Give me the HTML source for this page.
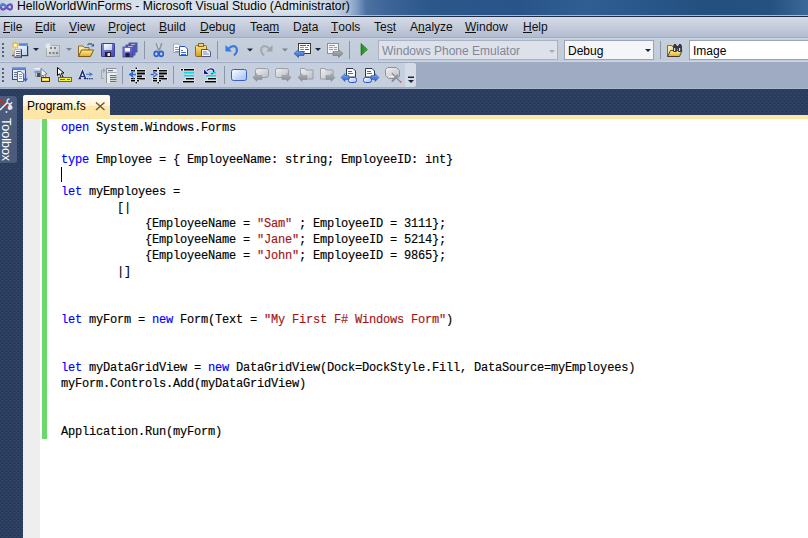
<!DOCTYPE html>
<html><head><meta charset="utf-8">
<style>
*{margin:0;padding:0;box-sizing:border-box}
html,body{width:808px;height:538px;overflow:hidden;background:#293955;font-family:"Liberation Sans",sans-serif}
#title{position:absolute;left:0;top:0;width:808px;height:15px;background:linear-gradient(90deg,#c3d0e1 0,#d3deea 14px,#dae3ee 300px,#c4d2e3 334px,#a8bcd4 348px,#7d9cc2 357px,#4d72a2 366px,#3e6698 385px,#2c578b 430px,#28548a 520px,#305e92 585px,#2b598d 630px,#24507f 700px,#25517f 770px,#3a6898 808px)}
#tglow{position:absolute;left:0;top:0;width:360px;height:15px;background:linear-gradient(rgba(255,255,255,0) 0,rgba(255,255,255,0.12) 60%,rgba(0,0,0,0.03) 100%);-webkit-mask-image:linear-gradient(90deg,#000 0,#000 330px,transparent 360px)}
#ttext{position:absolute;left:17px;top:-1px;font-size:12.2px;color:#000;white-space:nowrap;line-height:15px}
#tline{position:absolute;left:0;top:15px;width:808px;height:1px;background:linear-gradient(90deg,#c5d3e3 0,#c5d3e3 340px,#a8b9d2 370px,#a8b9d2 808px)}
#tline2{position:absolute;left:0;top:16px;width:808px;height:1px;background:#1f2d44}
#menu{position:absolute;left:0;top:17px;width:808px;height:21px;background:linear-gradient(#d5dbe7,#b3bdd0);border-bottom:1px solid #a0adc4}
#menu span{position:absolute;top:3px;font-size:12px;color:#101010;white-space:nowrap;line-height:14px}
#menu u{text-decoration:none;position:relative}#menu u::after{content:"";position:absolute;left:0;right:0;top:12px;height:1px;background:#101010}
#tb1{position:absolute;left:0;top:38px;width:808px;height:24px;background:linear-gradient(#c6cfdc,#c2cbd9);border-top:1px solid #cad3e1;border-bottom:1px solid #ccd5e2}
#tray{position:absolute;left:0;top:62px;width:808px;height:27px;background:#9eabc2;border-bottom:1px solid #aab7cd}
#tb2{position:absolute;left:0;top:63px;width:416px;height:24px;background:#c6cfdd;border-radius:0 3px 3px 0}
#tb2over{position:absolute;left:405px;top:63px;width:11px;height:24px;background:#d6dce7;border-radius:0 3px 3px 0}
#navy{position:absolute;left:0;top:89px;width:808px;height:449px}
#toolbox{position:absolute;left:0;top:96px;width:17px;height:67px;background:#4b5b7b;border-radius:0 3px 3px 0}
#tbtext{position:absolute;left:12px;top:118px;transform-origin:0 0;transform:rotate(90deg);font-size:12.5px;color:#fff;white-space:nowrap;line-height:13px}
#tab{position:absolute;left:23px;top:95px;width:87px;height:24px;border-radius:2px 2px 0 0;background:linear-gradient(#fffdf8 0,#fff2d4 11px,#fee7a8 11px,#fde6a6 24px)}
#tabtext{position:absolute;left:27px;top:99px;font-size:12px;color:#000;white-space:nowrap;line-height:14px}
#strip{position:absolute;left:23px;top:115px;width:785px;height:4px;background:#fde6a6}
#editor{position:absolute;left:23px;top:119px;width:785px;height:419px;background:#fff}
#margin{position:absolute;left:0;top:0;width:17px;height:419px;background:#eeeeee}
#green{position:absolute;left:19px;top:0;width:5px;height:320px;background:#6ad86a}
#caret{position:absolute;left:38px;top:48px;width:1px;height:15px;background:#000}
#code{-webkit-text-stroke:0.15px currentColor;position:absolute;left:38px;top:1px;font-family:"Liberation Mono",monospace;font-size:12px;letter-spacing:-0.2px;line-height:16px;white-space:pre;color:#000}
.k{color:#0000ff}.s{color:#a31515}
.combo{position:absolute;top:40px;height:20px;border:1px solid #a9b2c2;font-size:12px;line-height:17px;padding-left:3px;padding-top:2px;white-space:nowrap}
#icons{position:absolute;left:0;top:0}
</style></head><body>
<div id="title"></div>
<div id="tglow"></div>
<svg style="position:absolute;left:0;top:2px" width="13" height="10" viewBox="0 0 13 10"><path d="M1,5 C1,1.5 4,1.5 6.5,5 C9,8.5 12,8.5 12,5 C12,1.5 9,1.5 6.5,5 C4,8.5 1,8.5 1,5Z" fill="none" stroke="#6a4fc0" stroke-width="2.2"/><path d="M1,5 C1,1.5 4,1.5 6.5,5" fill="none" stroke="#5a7fc8" stroke-width="2.2"/></svg>
<div id="ttext">HelloWorldWinForms - Microsoft Visual Studio (Administrator)</div>
<div id="tline"></div>
<div id="tline2"></div>
<div id="menu">
<span style="left:3px"><u>F</u>ile</span>
<span style="left:35px"><u>E</u>dit</span>
<span style="left:69px"><u>V</u>iew</span>
<span style="left:108px"><u>P</u>roject</span>
<span style="left:159px"><u>B</u>uild</span>
<span style="left:200px"><u>D</u>ebug</span>
<span style="left:250px">Tea<u>m</u></span>
<span style="left:293px">D<u>a</u>ta</span>
<span style="left:331px"><u>T</u>ools</span>
<span style="left:374px">Te<u>s</u>t</span>
<span style="left:410px">A<u>n</u>alyze</span>
<span style="left:465px"><u>W</u>indow</span>
<span style="left:523px"><u>H</u>elp</span>
</div>
<div id="tb1"></div>
<div id="tray"></div>
<div id="tb2"></div>
<div id="tb2over"></div>
<div class="combo" style="left:378px;width:180px;background:#dde1ea;color:#7f8898">Windows Phone Emulator</div>
<div class="combo" style="left:564px;width:90px;background:#f3f5f9;color:#000;border-color:#9aa4b6">Debug</div>
<div class="combo" style="left:689px;width:140px;background:#fff;color:#000;border-color:#9aa4b6">Image</div>
<svg id="navy" width="808" height="449" viewBox="0 0 808 449"><defs><pattern id="dots" x="0" y="-89" width="4" height="4" patternUnits="userSpaceOnUse"><rect width="4" height="4" fill="#2c3e5d"/><rect x="2" y="0" width="1" height="1" fill="#36496c"/><rect x="0" y="2" width="1" height="1" fill="#36496c"/><rect x="0" y="1" width="1" height="1" fill="#263551"/><rect x="2" y="3" width="1" height="1" fill="#263551"/></pattern></defs><rect width="808" height="449" fill="url(#dots)"/></svg>
<div id="toolbox"></div>
<div id="tbtext">Toolbox</div>
<svg style="position:absolute;left:0;top:96px" width="17" height="20" viewBox="0 96 17 20"><path d="M0,99.5 L7,107" stroke="#d42a20" stroke-width="2"/><path d="M0,110 L8,102" stroke="#fff" stroke-width="1.3"/><path d="M9.5,99 A2.5,2.5 0 1 0 12,102" fill="none" stroke="#d8dce4" stroke-width="1.3"/><path d="M9.5,103 L7.5,108 A2.5,2.5 0 1 0 12,106 Z" fill="#dfe3ea"/><circle cx="6.5" cy="112" r="0.9" fill="#e8ecf2"/></svg>
<div id="tab"></div>
<div id="tabtext">Program.fs</div>
<svg style="position:absolute;left:94px;top:101px" width="12" height="10" viewBox="94 101 12 10"><path d="M96,102.5 L104.5,110 M104.5,102.5 L96,110" stroke="#6b5a3a" stroke-width="1.5"/></svg>
<div id="strip"></div>
<div id="editor">
<div id="margin"></div>
<div id="green"></div>
<div id="caret"></div>
<div id="code"><span class="k">open</span> System.Windows.Forms

<span class="k">type</span> Employee = { EmployeeName: string; EmployeeID: int}

<span class="k">let</span> myEmployees =
        [|
            {EmployeeName = <span class="s">"Sam"</span> ; EmployeeID = 3111};
            {EmployeeName = <span class="s">"Jane"</span>; EmployeeID = 5214};
            {EmployeeName = <span class="s">"John"</span>; EmployeeID = 9865};
        |]


<span class="k">let</span> myForm = <span class="k">new</span> Form(Text = <span class="s">"My First F# Windows Form"</span>)


<span class="k">let</span> myDataGridView = <span class="k">new</span> DataGridView(Dock=DockStyle.Fill, DataSource=myEmployees)
myForm.Controls.Add(myDataGridView)


Application.Run(myForm)</div>
</div>
<svg id="icons" width="808" height="89" viewBox="0 0 808 89">
<defs>
<linearGradient id="gWin" x1="0" y1="0" x2="1" y2="1"><stop offset="0" stop-color="#ffffff"/><stop offset="1" stop-color="#b9cbee"/></linearGradient>
<linearGradient id="gBlueBar" x1="0" y1="0" x2="0" y2="1"><stop offset="0" stop-color="#7aa3ee"/><stop offset="1" stop-color="#3f72d6"/></linearGradient>
<linearGradient id="gFold" x1="0" y1="0" x2="0" y2="1"><stop offset="0" stop-color="#fff0a0"/><stop offset="1" stop-color="#e8a818"/></linearGradient>
<linearGradient id="gFoldB" x1="0" y1="0" x2="1" y2="1"><stop offset="0" stop-color="#fff6c0"/><stop offset="1" stop-color="#e2b440"/></linearGradient>
<linearGradient id="gDisk" x1="0" y1="0" x2="1" y2="1"><stop offset="0" stop-color="#8c92e6"/><stop offset="1" stop-color="#4146a8"/></linearGradient>
<linearGradient id="gGray" x1="0" y1="0" x2="1" y2="1"><stop offset="0" stop-color="#f0f1f3"/><stop offset="1" stop-color="#b8bcc2"/></linearGradient>
<linearGradient id="gGrayArr" x1="0" y1="0" x2="0" y2="1"><stop offset="0" stop-color="#b4b8be"/><stop offset="1" stop-color="#80858c"/></linearGradient>
<linearGradient id="gBlueArr" x1="0" y1="0" x2="0" y2="1"><stop offset="0" stop-color="#7fb0f5"/><stop offset="1" stop-color="#2a5cc8"/></linearGradient>
<linearGradient id="gGreen" x1="0" y1="0" x2="1" y2="0"><stop offset="0" stop-color="#1e8a1e"/><stop offset="1" stop-color="#3cb83c"/></linearGradient>
<linearGradient id="gBm" x1="0" y1="0" x2="1" y2="1"><stop offset="0" stop-color="#ffffff"/><stop offset="1" stop-color="#9ebdf3"/></linearGradient>
<linearGradient id="gClip" x1="0" y1="0" x2="0" y2="1"><stop offset="0" stop-color="#fbe48a"/><stop offset="1" stop-color="#d89a1a"/></linearGradient>
</defs>
<!-- grippers -->
<g fill="#55617a">
<rect x="2" y="43" width="2" height="2"/><rect x="2" y="47" width="2" height="2"/><rect x="2" y="51" width="2" height="2"/><rect x="2" y="55" width="2" height="2"/>
<rect x="2" y="68" width="2" height="2"/><rect x="2" y="72" width="2" height="2"/><rect x="2" y="76" width="2" height="2"/><rect x="2" y="80" width="2" height="2"/>
</g>
<!-- separators -->
<g fill="#8a95a8">
<rect x="144" y="41" width="1" height="18"/><rect x="217" y="41" width="1" height="18"/><rect x="349" y="41" width="1" height="18"/><rect x="660" y="41" width="1" height="18"/>
<rect x="122" y="66" width="1" height="18"/><rect x="173" y="66" width="1" height="18"/><rect x="224" y="66" width="1" height="18"/>
</g>
<!-- 1 new project -->
<defs><linearGradient id="gGoldV" x1="0" y1="0" x2="0" y2="1"><stop offset="0" stop-color="#ffe27a"/><stop offset="1" stop-color="#e8a010"/></linearGradient></defs>
<rect x="13" y="45.5" width="15" height="10" fill="url(#gWin)"/>
<rect x="27" y="46" width="1.2" height="10" fill="#2c3c5c"/>
<rect x="12" y="55" width="16.2" height="1.2" fill="#2c3c5c"/>
<rect x="19" y="43" width="9" height="2.7" fill="url(#gBlueBar)"/>
<rect x="12.5" y="48" width="1.6" height="7.5" fill="url(#gGoldV)"/>
<g stroke="#f0be1c" stroke-width="1.5" stroke-linecap="round"><path d="M15.4,42.3 V48.3 M12.4,45.3 H18.4 M13.2,43.1 L17.6,47.5 M17.6,43.1 L13.2,47.5"/></g>
<circle cx="15.4" cy="45.3" r="1.5" fill="#fffbe8"/>
<rect x="14.3" y="49" width="7.6" height="8.5" fill="#f4f7fc"/>
<path d="M21.4,49.2 V57.2 H14.3" fill="none" stroke="#2f4060" stroke-width="1.2"/>
<path d="M14.6,57 V49.3 H21.2" fill="none" stroke="#7d8ca8" stroke-width="0.7"/>
<g fill="#3f74dc"><rect x="16" y="51" width="4.5" height="1"/><rect x="16" y="53" width="4.5" height="1"/><rect x="16" y="55" width="4.5" height="1"/></g>
<path d="M33,48 H39 L36,51Z" fill="#1a2742"/>
<!-- 2 add item gray -->
<rect x="46.5" y="45.5" width="13" height="11" fill="url(#gGray)" stroke="#a7acb4"/>
<g stroke="#e8eaee" stroke-width="1.2"><path d="M48,43 V49 M45,46 H51 M46,44 L50,48 M50,44 L46,48"/></g>
<g fill="#7e838b"><rect x="50" y="47" width="2" height="2"/><rect x="54" y="47" width="2" height="2"/><rect x="49" y="52" width="2" height="2"/><rect x="52.5" y="52" width="2" height="2"/><rect x="56" y="52" width="2" height="2"/></g>
<path d="M66,48 H72 L69,51Z" fill="#7b8391"/>
<!-- 3 open folder -->
<path d="M78.5,56.5 V46 H83 L84.5,47.5 H89 V56.5Z" fill="url(#gFoldB)" stroke="#8a6a28"/>
<path d="M78.5,56.5 L81.5,50 H93.5 L90.5,56.5Z" fill="url(#gFold)" stroke="#7a5a18"/>
<path d="M87.5,45 Q90,42.5 92.5,45" fill="none" stroke="#48679e" stroke-width="1.3"/>
<path d="M91,46.5 L94,43.5 L94,46.5Z" fill="#3a5a98"/>
<!-- 4 save -->
<rect x="101" y="43" width="14" height="14" rx="1" fill="url(#gDisk)"/>
<rect x="101.5" y="43.5" width="13" height="13" rx="1" fill="none" stroke="#3b3f98" stroke-width="1"/>
<rect x="104" y="44" width="8" height="6" fill="url(#gWin)"/>
<rect x="105" y="52" width="6" height="5" fill="#1e2030"/>
<rect x="107.5" y="53" width="2.5" height="3" fill="#e8e8e8"/>
<!-- 5 save all -->
<rect x="129" y="43" width="8" height="9" fill="#6068c8" stroke="#3b3f98" stroke-width="0.8"/>
<rect x="131" y="44" width="4" height="1.2" fill="#fff"/>
<rect x="126" y="45" width="9" height="10" fill="#6068c8" stroke="#3b3f98" stroke-width="0.8"/>
<rect x="128" y="46" width="5" height="1.2" fill="#fff"/>
<rect x="123" y="47" width="10" height="10" fill="url(#gDisk)" stroke="#3b3f98" stroke-width="0.8"/>
<rect x="125" y="48" width="5" height="3.5" fill="#f4f6ff"/>
<rect x="125.5" y="53" width="4" height="4" fill="#1e2030"/>
<!-- 6 scissors -->
<path d="M156.2,43.2 L158.8,50.5 M161.8,43.2 L159.2,50.5" stroke="#8f9398" stroke-width="1.5"/>
<path d="M157.5,43.5 L159,48" stroke="#e8eaee" stroke-width="0.6"/>
<ellipse cx="156.3" cy="53.8" rx="2.1" ry="2.5" fill="none" stroke="#2d62d2" stroke-width="1.7"/>
<ellipse cx="161.2" cy="53.8" rx="2.1" ry="2.5" fill="none" stroke="#2d62d2" stroke-width="1.7"/>
<!-- 7 copy -->
<path d="M173.5,44 H178.5 L181,46.5 V52.5 H173.5Z" fill="#fbfcff" stroke="#8a9ab6" stroke-width="0.8"/>
<g fill="#6a9ae0"><rect x="175" y="47" width="3" height="1"/><rect x="175" y="49" width="4" height="1"/><rect x="175" y="51" width="4" height="1"/></g>
<path d="M179.5,46.5 H185 L187.5,49 V55.5 H179.5Z" fill="#f8faff" stroke="#2b56b0"/>
<g fill="#3f74dc"><rect x="181" y="50" width="2" height="1"/><rect x="181" y="52" width="5" height="1"/><rect x="181" y="54" width="5" height="1"/></g>
<!-- 8 paste -->
<rect x="195.5" y="45.5" width="11" height="11" rx="1" fill="url(#gClip)" stroke="#8a6a20"/>
<rect x="198.5" y="43.5" width="5" height="3" fill="#f0d070" stroke="#8a6a20"/>
<path d="M201.5,49.5 H208 L210.5,52 V56.5 H201.5Z" fill="#eef2f8" stroke="#4a5a78"/>
<g fill="#7a8aa8"><rect x="203" y="51.5" width="4" height="1"/><rect x="203" y="53.5" width="6" height="1"/></g>
<!-- 9 undo -->
<path d="M228.5,48.5 Q234,44 236.5,48 Q238,52 234,55.5" fill="none" stroke="#3a7ae0" stroke-width="2.2"/>
<path d="M225.5,45 V51.5 H232Z" fill="#3a7ae0"/>
<path d="M247,48.5 H253 L250,51.5Z" fill="#1a2742"/>
<!-- 10 redo gray -->
<path d="M269.5,48.5 Q264,44 261.5,48 Q260,52 264,55.5" fill="none" stroke="#a7abb1" stroke-width="2.2"/>
<path d="M272.5,45 V51.5 H266Z" fill="#a0a4aa"/>
<path d="M282,48.5 H288 L285,51.5Z" fill="#7b8391"/>
<!-- 11 nav back -->
<rect x="298.5" y="43.5" width="12" height="10" fill="#fff" stroke="#3c3a30"/>
<g fill="#2f5ad8"><rect x="300" y="45" width="6" height="1"/><rect x="307" y="45" width="2" height="1"/><rect x="305" y="49" width="4" height="1"/></g>
<g fill="#8a8f98"><rect x="300" y="47" width="4" height="1"/><rect x="305" y="47" width="3" height="1"/><rect x="300" y="49" width="4" height="1"/><rect x="300" y="51" width="5" height="1"/></g>
<path d="M294,53.5 L298.5,49.5 V51.5 H304 V55.5 H298.5 V57.5Z" fill="url(#gBlueArr)" stroke="#1f4aa8" stroke-width="0.6"/>
<path d="M315,48 H321 L318,51Z" fill="#1a2742"/>
<!-- 12 nav forward gray -->
<rect x="327.5" y="43.5" width="11" height="10" fill="#f2f3f5" stroke="#8d9198"/>
<g fill="#9aa0a8"><rect x="329" y="45" width="6" height="1"/><rect x="329" y="47" width="4" height="1"/><rect x="334" y="47" width="3" height="1"/><rect x="329" y="49" width="4" height="1"/><rect x="334" y="49" width="3" height="1"/></g>
<path d="M343,53.5 L338.5,49.5 V51.5 H333 V55.5 H338.5 V57.5Z" fill="url(#gGrayArr)" stroke="#70757c" stroke-width="0.6"/>
<!-- 13 play -->
<path d="M361,43.5 L367.5,49.5 L361,55.5Z" fill="url(#gGreen)" stroke="#1a6a1a" stroke-width="0.6"/>
<!-- combo arrows -->
<path d="M549,50 H555 L552,53Z" fill="#a3aab6"/>
<path d="M645,49 H651 L648,52Z" fill="#1a2742"/>
<!-- 14 find in files -->
<path d="M667.5,56.5 V45.5 H672 L673,47 H678 V56.5Z" fill="url(#gFoldB)" stroke="#8a6a28"/>
<path d="M667.5,56.5 L670.5,50.5 H682 L679.5,56.5Z" fill="url(#gFold)" stroke="#2a2a2a" stroke-width="0.8"/>
<g fill="#333a44"><rect x="673" y="45" width="4" height="7" rx="1"/><rect x="678" y="45" width="4" height="7" rx="1"/><rect x="676" y="46" width="3" height="3"/><rect x="674" y="44" width="2" height="2"/><rect x="679" y="44" width="2" height="2"/></g>
<g fill="#d8dde4"><rect x="674" y="48" width="1.2" height="3"/><rect x="679" y="48" width="1.2" height="3"/></g>

<!-- toolbar 2 -->
<!-- A -->
<rect x="12.5" y="67.5" width="13" height="12" fill="url(#gWin)" stroke="#3a4a68"/>
<rect x="12" y="67" width="14" height="3" fill="url(#gBlueBar)"/>
<g fill="#6c7890"><rect x="14" y="72" width="3" height="1"/><rect x="14" y="74" width="3" height="1"/><rect x="14" y="76" width="3" height="1"/></g>
<path d="M17.5,71.5 H21 L23.5,74 V81.5 H17.5Z" fill="#f6f8fc" stroke="#5a6a88"/>
<g fill="#8a98b0"><rect x="19" y="74" width="3" height="1"/><rect x="19" y="76" width="3" height="1"/><rect x="19" y="78" width="3" height="1"/></g>
<path d="M25.5,74 V80" stroke="#2f62d0" stroke-width="1.4"/>
<path d="M23,78.5 H28 L25.5,82Z" fill="#2f62d0"/>
<!-- B -->
<defs><linearGradient id="gSmW" x1="0" y1="0" x2="0" y2="1"><stop offset="0" stop-color="#ffffff"/><stop offset="1" stop-color="#8fb4ec"/></linearGradient></defs>
<rect x="34.5" y="68" width="6" height="3.5" fill="url(#gSmW)"/>
<rect x="34.5" y="71.5" width="6" height="1" fill="#5c6674"/>
<path d="M35.5,72.5 V76.5 H37" fill="none" stroke="#8a9099" stroke-width="0.8"/>
<rect x="37" y="73" width="3.5" height="4" fill="#4a4e55"/>
<path d="M41,68.5 L41,76.5 L43,75 L44.5,78.5 L46,77.8 L44.8,74.5 L47,74Z" fill="#f2f4f7" stroke="#5a6270" stroke-width="0.8" stroke-linejoin="round"/>
<rect x="41.5" y="77.5" width="8" height="4" fill="#f8d848" stroke="#2a3a60"/>
<rect x="43" y="79" width="5" height="1" fill="#fff3b0"/>
<!-- C -->
<path d="M57.5,67.5 L57.5,75.5 L59.5,73.8 L61.5,77.8 L63,77 L61.2,73.2 L64,73Z" fill="#fff" stroke="#000" stroke-width="1" stroke-linejoin="miter"/>
<rect x="58.5" y="77.5" width="13" height="4" fill="#f5f040" stroke="#56647e"/>
<g fill="#3a68d0"><rect x="60" y="79" width="5" height="1"/><rect x="67" y="79" width="3" height="1"/></g>
<!-- D -->
<path d="M79.5,78.5 L82.5,71 L85.5,78.5" fill="none" stroke="#fff" stroke-opacity="0.7" stroke-width="2.8"/>
<path d="M79.5,78.5 L82.5,71 L85.5,78.5" fill="none" stroke="#1f2f78" stroke-width="1.5"/>
<rect x="81" y="76" width="3" height="1" fill="#1f2f78"/>
<rect x="78.5" y="78" width="2.5" height="1.2" fill="#1f2f78"/><rect x="84" y="78" width="2.5" height="1.2" fill="#1f2f78"/>
<g fill="#1f2f78"><rect x="87" y="78" width="1.3" height="1.3"/><rect x="89.2" y="78" width="1.3" height="1.3"/><rect x="91.4" y="78" width="1.3" height="1.3"/></g>
<path d="M86,74.3 H91" stroke="#4a86e8" stroke-width="1.2"/>
<path d="M89,72 L93,74.3 L89,76.6 L90,74.3Z" fill="#3a72d8"/>
<!-- E gray tree doc -->
<path d="M104,70.5 H101.5 V78.5 H104" fill="none" stroke="#a2a8b0"/>
<path d="M103,68 L106,70.5 L103,73Z" fill="#a2a8b0"/>
<rect x="106" y="68" width="10.5" height="15" fill="#eceef2"/>
<rect x="106" y="68" width="10.5" height="1" fill="#8d939b"/>
<rect x="106" y="68" width="1" height="15" fill="#8d939b"/>
<rect x="107" y="72" width="9.5" height="1" fill="#a7adb5"/>
<g fill="#6e737a"><rect x="108" y="70" width="5" height="1.2"/><rect x="110" y="75" width="6.5" height="1.2"/><rect x="110" y="77" width="6.5" height="1.2"/><rect x="110" y="79" width="6.5" height="1.2"/><rect x="110" y="81" width="6.5" height="1.2"/></g>
<!-- indent dec / inc -->
<g id="indg">
<g fill="#000" stroke="#fff" stroke-opacity="0.75" stroke-width="1" paint-order="stroke">
<rect x="135.5" y="67.5" width="1.5" height="1.5"/><rect x="135.5" y="82" width="1.5" height="1.5"/>
<rect x="131" y="70" width="4" height="1.5"/><rect x="137" y="70" width="8" height="1.5"/>
<rect x="137" y="72.5" width="8" height="2"/>
<rect x="137" y="75.5" width="5" height="2"/>
<rect x="131" y="78" width="4" height="1.5"/><rect x="137" y="78" width="8" height="1.5"/>
<rect x="131" y="80" width="4" height="1.5"/><rect x="137" y="80" width="2" height="1.5"/>
</g>
</g>
<path d="M128.5,74.5 L134,70.5 L132.5,74.5 L134,78.5Z M131,73.7 H136 V75.3 H131Z" fill="#2f66d8" stroke="#fff" stroke-opacity="0.6" stroke-width="0.6" paint-order="stroke"/>
<g transform="translate(22,0)">
<g fill="#000" stroke="#fff" stroke-opacity="0.75" stroke-width="1" paint-order="stroke">
<rect x="135.5" y="67.5" width="1.5" height="1.5"/><rect x="135.5" y="82" width="1.5" height="1.5"/>
<rect x="131" y="70" width="4" height="1.5"/><rect x="137" y="70" width="8" height="1.5"/>
<rect x="137" y="72.5" width="8" height="2"/>
<rect x="137" y="75.5" width="5" height="2"/>
<rect x="131" y="78" width="4" height="1.5"/><rect x="137" y="78" width="8" height="1.5"/>
<rect x="131" y="80" width="4" height="1.5"/><rect x="137" y="80" width="2" height="1.5"/>
</g>
</g>
<path d="M158,74.5 L152.5,70.5 L154,74.5 L152.5,78.5Z M150.5,73.7 H155.5 V75.3 H150.5Z" fill="#2f66d8" stroke="#fff" stroke-opacity="0.6" stroke-width="0.6" paint-order="stroke"/>
<!-- comment -->
<g fill="#000" stroke="#fff" stroke-opacity="0.8" stroke-width="1" paint-order="stroke"><rect x="181" y="69" width="2" height="1.5"/><rect x="184" y="69" width="10" height="1.5"/><rect x="186" y="78" width="8" height="1.5"/><rect x="183" y="81" width="11" height="1.5"/></g>
<g fill="#00e0f0"><rect x="184" y="72" width="10" height="1.5"/><rect x="184" y="75" width="10" height="1.5"/></g>
<!-- uncomment -->
<path d="M207,70.5 Q211,67.5 213.5,70 Q214.5,72.5 211.5,74" fill="none" stroke="#fff" stroke-opacity="0.8" stroke-width="2.6"/>
<path d="M207,70.5 Q211,67.5 213.5,70 Q214.5,72.5 211.5,74" fill="none" stroke="#0a1a90" stroke-width="1.4"/>
<path d="M204,69.5 L204,74 L208.5,74Z" fill="#0a1a90" stroke="#fff" stroke-opacity="0.8" stroke-width="1" paint-order="stroke"/>
<g fill="#00e0f0"><rect x="212" y="72" width="4" height="1.5"/><rect x="206" y="75" width="10" height="1.5"/></g>
<g fill="#000" stroke="#fff" stroke-opacity="0.8" stroke-width="1" paint-order="stroke"><rect x="208" y="78" width="8" height="1.5"/><rect x="205" y="81" width="11" height="1.5"/></g>
<!-- bookmark -->
<rect x="231.5" y="69.5" width="15" height="11" rx="2" fill="url(#gBm)" stroke="#3a5fc0"/>
<!-- prev bm gray -->
<rect x="255.5" y="68.5" width="13" height="9" rx="2" fill="url(#gGray)" stroke="#9a9ea6"/>
<path d="M253,77.5 L257,73.5 V75.5 H262 V79.5 H257 V81.5Z" fill="url(#gGrayArr)" stroke="#8a8f96" stroke-width="0.5"/>
<!-- next bm gray -->
<rect x="275.5" y="68.5" width="13" height="9" rx="2" fill="url(#gGray)" stroke="#9a9ea6"/>
<path d="M291,77.5 L287,73.5 V75.5 H282 V79.5 H287 V81.5Z" fill="url(#gGrayArr)" stroke="#8a8f96" stroke-width="0.5"/>
<!-- prev folder gray -->
<path d="M300.5,79 V68.5 H305 L306,70 H313 V79Z" fill="url(#gGray)" stroke="#9a9ea6"/>
<path d="M298,77.5 L302,73.5 V75.5 H307 V79.5 H302 V81.5Z" fill="url(#gGrayArr)" stroke="#8a8f96" stroke-width="0.5"/>
<!-- next folder gray -->
<path d="M320.5,79 V68.5 H325 L326,70 H333 V79Z" fill="url(#gGray)" stroke="#9a9ea6"/>
<path d="M335,77.5 L331,73.5 V75.5 H326 V79.5 H331 V81.5Z" fill="url(#gGrayArr)" stroke="#8a8f96" stroke-width="0.5"/>
<!-- prev in doc blue -->
<path d="M346.5,68.5 H353 L355.5,71 V77 H346.5Z" fill="#fff" stroke="#2a3a60"/>
<g fill="#3a6ad8"><rect x="348" y="71" width="4" height="1"/><rect x="348" y="73" width="5" height="1"/></g>
<rect x="348.5" y="77.5" width="8" height="5" rx="2" fill="url(#gBm)" stroke="#2a56c0"/>
<path d="M341,77.5 L345,73.5 V75.5 H349 V79.5 H345 V81.5Z" fill="url(#gBlueArr)" stroke="#1f4aa8" stroke-width="0.5"/>
<!-- next in doc blue -->
<path d="M365.5,68.5 H372 L374.5,71 V77 H365.5Z" fill="#fff" stroke="#2a3a60"/>
<g fill="#3a6ad8"><rect x="367" y="71" width="4" height="1"/><rect x="367" y="73" width="5" height="1"/></g>
<rect x="363.5" y="77.5" width="8" height="5" rx="2" fill="url(#gBm)" stroke="#2a56c0"/>
<path d="M379,77.5 L375,73.5 V75.5 H371 V79.5 H375 V81.5Z" fill="url(#gBlueArr)" stroke="#1f4aa8" stroke-width="0.5"/>
<!-- clear bm gray -->
<path d="M387.5,67.5 H396.5 L399.5,70.5 V76.5 L397.5,78.5 H388.5 L385.5,75.5 V69.5Z" fill="url(#gGray)" stroke="#8e9399"/>
<path d="M389,76.5 H398" stroke="#f4f5f7" stroke-width="1"/>
<path d="M391.8,73 L400,81.5" stroke="#8a8e94" stroke-width="1.2"/>
<path d="M397.5,75.5 L392.5,81" stroke="#8a8e94" stroke-width="2" stroke-linecap="round"/>
<rect x="400" y="81" width="1.5" height="1.5" fill="#e8502a"/>
<!-- overflow chevron -->
<rect x="408" y="76.5" width="6" height="1.5" fill="#1a2742"/>
<path d="M408,80 H414 L411,83Z" fill="#1a2742"/>
</svg>
</body></html>
